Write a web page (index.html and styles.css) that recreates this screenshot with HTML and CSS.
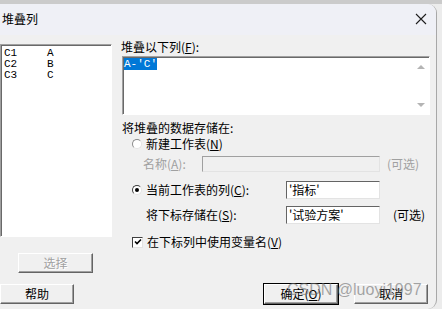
FILE: index.html
```html
<!DOCTYPE html>
<html lang="zh-CN">
  <head>
    <meta charset="UTF-8" />
    <meta name="viewport" content="width=device-width, initial-scale=1.0" />
    <title>堆叠列</title>
    <link rel="stylesheet" href="styles.css">
  </head>
  <body>
    <div class="window">
      <div class="titlebar">
        <span class="title">堆叠列</span>
        <svg class="close" width="12" height="12" viewBox="0 0 12 12">
          <path d="M1 1L11 11M11 1L1 11" stroke="#1e1e1e" stroke-width="1.1" fill="none" />
        </svg>
      </div>

      <div class="content">
        <div class="left">
          <div class="listbox">
            <div class="item"><span class="col">C1</span>A</div>
            <div class="item"><span class="col">C2</span>B</div>
            <div class="item"><span class="col">C3</span>C</div>
          </div>
          <button class="btn select" disabled>选择</button>
        </div>

        <div class="right">
          <div class="label first">堆叠以下列(<u>F</u>):</div>
          <div class="textarea">
            <div class="text"><span class="sel">A-'C'</span></div>
            <div class="scroll">
              <span class="arrow up"></span>
              <span class="arrow down"></span>
            </div>
          </div>

          <div class="label group">将堆叠的数据存储在:</div>
          <div class="row radio-row">
            <span class="radio"></span>新建工作表(<u>N</u>)
          </div>
          <div class="row name-row">
            <span class="name-label">名称(<u>A</u>):</span>
            <span class="field off"></span>
            <span class="opt gray">(可选)</span>
          </div>
          <div class="row col-row">
            <span class="radio on"></span>
            <span class="field-label">当前工作表的列(<u>C</u>):</span>
            <span class="field">'指标'</span>
          </div>
          <div class="row sub-row">
            <span class="field-label">将下标存储在(<u>S</u>):</span>
            <span class="field">'试验方案'</span>
            <span class="opt">(可选)</span>
          </div>
          <div class="row check-row">
            <span class="check">
              <svg width="8" height="8" viewBox="0 0 8 8">
                <path d="M1 3.5L3 5.5L7 1.5" stroke="#000" stroke-width="1.6" fill="none" />
              </svg>
            </span>
            在下标列中使用变量名(<u>V</u>)
          </div>
        </div>
      </div>

      <div class="footer">
        <button class="btn">帮助</button>
        <div class="actions">
          <button class="btn default">确定(<u>O</u>)</button>
          <button class="btn">取消</button>
        </div>
      </div>

      <div class="watermark">CSDN @luoyi1997</div>
    </div>
  </body>
</html>
```

FILE: styles.css
```css
* {
  margin: 0;
  padding: 0;
  box-sizing: border-box;
}
body {
  background: linear-gradient(#cbcbcb 0, #cbcbcb 4px, #ececec 4px);
  font-family: "Noto Sans CJK SC", "Liberation Sans", sans-serif;
  font-size: 12px;
  color: #000;
  overflow: hidden;
}
u {
  text-decoration-thickness: 1px;
  text-underline-offset: 1px;
}

.window {
  position: relative;
  margin-top: 4px;
  width: 437px;
  height: 305px;
  background-color: #f0f0f0;
  border-right: 1px solid #a8a8a8;
  border-radius: 0 9px 9px 0;
  overflow: hidden;
}
.titlebar {
  height: 31px;
  background-color: #eff0f6;
  display: flex;
  align-items: center;
  justify-content: space-between;
  padding: 0 9px 1px 2px;
}
.title {
  line-height: 14px;
}

.content {
  display: flex;
}
.left {
  width: 112px;
  display: flex;
  flex-direction: column;
}
.listbox {
  margin-top: 9px;
  height: 193px;
  background-color: #fff;
  border: 1px solid;
  border-color: #a0a0a0 #fff #fff #a0a0a0;
  box-shadow: inset 1px 1px 0 #696969;
  padding: 3px 0 0 3px;
  font-family: "Liberation Mono", monospace;
  font-size: 11px;
  line-height: 11px;
}
.col {
  display: inline-block;
  width: 43px;
}

.btn {
  font-family: "Noto Sans CJK SC", sans-serif;
  font-size: 12px;
  line-height: 14px;
  width: 74px;
  height: 20px;
  background-color: #f0f0f0;
  color: #000;
  border: 1px solid;
  border-color: #fff #646464 #646464 #fff;
  box-shadow: inset -1px -1px 0 #a0a0a0;
}
.btn.select {
  margin: 16px 0 0 18px;
  width: 75px;
  color: #a0a0a0;
  text-shadow: 1px 1px 0 #fff;
}
.btn.default {
  outline: 1px solid #000;
}

.right {
  margin-left: 10px;
  width: 308px;
}
.label {
  line-height: 14px;
}
.label.first {
  margin: 5px 0 2px -1px;
}
.textarea {
  height: 59px;
  display: flex;
  background-color: #fff;
  border: 1px solid;
  border-color: #a0a0a0 #fff #fff #a0a0a0;
  box-shadow: inset 1px 1px 0 #696969;
}
.text {
  flex: 1;
  padding: 1px 0 0 1px;
  font-family: "Liberation Mono", monospace;
  font-size: 11px;
  line-height: 12px;
}
.sel {
  background-color: #0078d7;
  color: #fff;
}
.scroll {
  width: 16px;
  padding: 8px 0 7px;
  display: flex;
  flex-direction: column;
  justify-content: space-between;
  align-items: center;
}
.arrow {
  width: 0;
  height: 0;
  border-left: 4px solid transparent;
  border-right: 4px solid transparent;
}
.arrow.up {
  border-bottom: 4px solid #b4b4b4;
}
.arrow.down {
  border-top: 4px solid #b4b4b4;
}

.label.group {
  margin-top: 6px;
}
.row {
  display: flex;
  align-items: center;
  line-height: 14px;
  white-space: nowrap;
}
.radio-row {
  margin-top: 2px;
  height: 14px;
  padding-left: 10px;
}
.radio {
  width: 10px;
  height: 10px;
  margin-right: 4px;
  border-radius: 50%;
  background-color: #fff;
  border: 1px solid;
  border-color: #8a8a8a #e3e3e3 #e3e3e3 #8a8a8a;
  display: flex;
  align-items: center;
  justify-content: center;
}
.radio.on {
  border-color: #404040 #e3e3e3 #e3e3e3 #404040;
}
.radio.on::after {
  content: "";
  width: 4px;
  height: 4px;
  border-radius: 50%;
  background-color: #000;
}

.name-row {
  margin-top: 5px;
  height: 16px;
  padding-left: 21px;
  color: #a0a0a0;
}
.name-label {
  width: 59px;
}
.field {
  height: 18px;
  width: 94px;
  padding-left: 2px;
  background-color: #fff;
  border: 1px solid;
  border-color: #646464 #e3e3e3 #e3e3e3 #646464;
  line-height: 16px;
  color: #000;
}
.field.off {
  width: 178px;
  height: 16px;
  background-color: #f0f0f0;
  border-color: #a0a0a0 #e3e3e3 #e3e3e3 #a0a0a0;
}
.opt {
  margin-left: 13px;
}
.opt.gray {
  margin-left: 7px;
  color: #a0a0a0;
}

.col-row {
  margin-top: 9px;
  padding-left: 10px;
}
.field-label {
  width: 140px;
}
.sub-row {
  margin-top: 7px;
  padding-left: 24px;
}
.check-row {
  margin-top: 11px;
  padding-left: 10px;
}
.check {
  width: 11px;
  height: 11px;
  margin-right: 4px;
  background-color: #fff;
  border: 1px solid;
  border-color: #404040 #e3e3e3 #e3e3e3 #404040;
  display: flex;
  align-items: center;
  justify-content: center;
}

.footer {
  display: flex;
  align-items: center;
  margin-top: 11px;
  padding-right: 8px;
}
.actions {
  margin-left: auto;
  display: flex;
  gap: 16px;
}
.actions .btn {
  width: 74px;
}

.watermark {
  position: absolute;
  left: 287px;
  top: 276px;
  font-family: "Liberation Sans", sans-serif;
  font-size: 16px;
  line-height: 20px;
  color: rgba(110, 110, 110, 0.6);
  pointer-events: none;
}
```
